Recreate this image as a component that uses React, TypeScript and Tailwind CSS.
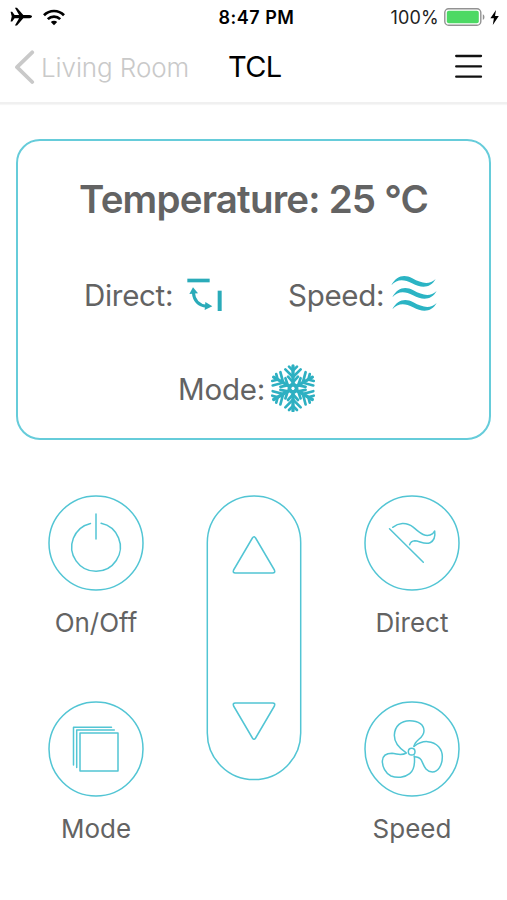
import React from 'react';

const STROKE = '#52c5d4';

const StatusBar: React.FC = () => (
    <div className="flex h-[34px] items-center justify-between pl-[10px] pr-[8px]">
        <div className="flex w-[180px] items-center gap-[11px]">
            <svg width="22" height="20" viewBox="0 0 22 20" fill="#000">
                <path d="M0.6 4.8H2.2L4.6 8H9.1L4.9 0.8H7L13.3 8H19.4C21.2 8 22 9 22 9.6C22 10.3 21.2 11.2 19.4 11.2H13.3L7 18.6H4.9L9.1 11.2H4.6L2.2 14.4H0.6L1.7 9.6Z" />
            </svg>
            <svg width="22" height="17" viewBox="0 0 22 17" fill="none" stroke="#000" strokeWidth="2.7">
                <path d="M1 6.2C6.5 0.6 15.5 0.6 21 6.2" />
                <path d="M4.8 10.1C8.3 6.7 13.7 6.7 17.2 10.1" />
                <path d="M11 16.2L7.8 13C9.5 11.4 12.5 11.4 14.2 13Z" fill="#000" stroke="none" />
            </svg>
        </div>
        <span className="pl-[4px] pt-px text-[18px] font-semibold tracking-[0.5px] text-black">8:47 PM</span>
        <div className="flex w-[180px] items-center justify-end">
            <span className="mr-[5px] pt-px text-[18px] tracking-[0.2px] text-[#222]">100%</span>
            <svg width="42" height="18" viewBox="0 0 42 18">
                <rect x="0.8" y="0.8" width="36" height="16.4" rx="3.8" fill="#fff" stroke="#929292" strokeWidth="1.4" />
                <rect x="2.8" y="2.8" width="32" height="12.4" rx="2" fill="#4cd964" />
                <path d="M38.8 6.2C41 7 41 11 38.8 11.8Z" fill="#929292" />
            </svg>
            <svg className="ml-[4px]" width="9" height="15" viewBox="0 0 9 15" fill="#000">
                <path d="M6 0L0.4 8.3H3.9L2.8 15L8.8 6H5Z" />
            </svg>
        </div>
    </div>
);

const NavBar: React.FC = () => (
    <div className="flex h-[70px] items-center border-b-2 border-[#f0f0f0] pb-[2px] pl-[14px] pr-[24px] shadow-[0_1px_1px_#f6f6f6]">
        <button className="flex w-[214px] items-center text-[#c9c9c9]">
            <svg width="22" height="34" viewBox="0 0 22 34" fill="none" stroke="currentColor" strokeWidth="3.8" strokeLinecap="round" strokeLinejoin="round">
                <path d="M18.2 2.3L3 17.2L18.2 32" />
            </svg>
            <span className="ml-[5px] whitespace-nowrap pt-px text-[26px] font-light tracking-[-0.1px]">Living Room</span>
        </button>
        <h1 className="text-[29px] tracking-[-0.6px] text-black">TCL</h1>
        <button className="mb-[2px] ml-auto">
            <svg width="30" height="26" viewBox="0 0 30 26" stroke="#111" strokeWidth="2.3" strokeLinecap="round">
                <path d="M3.2 3H28M3.2 13.4H28M3.2 23.7H28" />
            </svg>
        </button>
    </div>
);

const SwingIcon: React.FC = () => (
    <svg width="38" height="36" viewBox="348 49 114 108" fill="#2aabb9">
        <rect x="352" y="57" width="67" height="11" />
        <rect x="443" y="93" width="12" height="61" />
        <path d="M370 98C372 123 386 137 410 140" fill="none" stroke="#2aabb9" strokeWidth="9" />
        <path d="M369 83L384 101L358 103Z" />
        <path d="M427 140L404 151L406 127Z" />
    </svg>
);

const WavesIcon: React.FC = () => {
    const wave = 'M4 34C19 5 43 0 67 13C94 28 117 34 137 15C122 42 96 44 66 28C42 15 22 14 4 34Z';
    return (
        <svg width="48" height="40" viewBox="0 0 144 120" fill="#2bb4c4">
            <path d={wave} />
            <path d={wave} transform="translate(3 36)" />
            <path d={wave} transform="translate(3 72)" />
        </svg>
    );
};

const SnowflakeIcon: React.FC = () => (
    <svg width="48" height="48" viewBox="-72 -73 144 144" fill="none" stroke="#2eb0c2" strokeWidth="8" strokeLinecap="round">
        {[0, 60, 120, 180, 240, 300].map((angle) => (
            <g key={angle} transform={`rotate(${angle})`}>
                <path d="M0 -10V-67" strokeWidth="10" />
                <path d="M-12 -65L0 -53L12 -65" />
                <path d="M-23 -57L0 -34L23 -57" />
                <path d="M-15 -35L0 -18L15 -35" />
            </g>
        ))}
        <circle r="11" strokeWidth="11" />
    </svg>
);

const DisplayPanel: React.FC = () => (
    <div className="mx-[16px] mt-[35px] h-[301px] rounded-[24px] border-2 border-[#66ccda] text-[#636363]">
        <h2 className="mt-[34px] whitespace-nowrap text-center text-[38.5px] font-semibold leading-[48px] tracking-[-0.8px]">Temperature: 25 °C</h2>
        <div className="mt-[51px] flex h-[40px] items-center pl-[66px]">
            <div className="flex w-[204px] items-center">
                <span className="w-[102px] whitespace-nowrap pt-[3px] text-[29.5px] tracking-[-0.3px]">Direct:</span>
                <SwingIcon />
            </div>
            <div className="flex items-center">
                <span className="w-[102px] whitespace-nowrap pt-[3px] text-[29.5px] tracking-[-0.3px]">Speed:</span>
                <WavesIcon />
            </div>
        </div>
        <div className="mt-[50px] flex h-[48px] items-center pl-[160px]">
            <span className="w-[91px] whitespace-nowrap pt-[3px] text-[29.5px] tracking-[-0.2px]">Mode:</span>
            <SnowflakeIcon />
        </div>
    </div>
);

interface RoundButtonProps {
    label: string;
    children: React.ReactNode;
}

const RoundButton: React.FC<RoundButtonProps> = ({ label, children }) => (
    <button className="flex w-[96px] flex-col items-center">
        <svg width="96" height="96" viewBox="0 0 96 96" fill="none" stroke={STROKE} strokeWidth="1.5" strokeLinecap="round" strokeLinejoin="round">
            <circle cx="48" cy="48" r="47" />
            {children}
        </svg>
        <span className="mt-[14px] whitespace-nowrap text-[26px] leading-[36px] text-[#636363]">{label}</span>
    </button>
);

const Controls: React.FC = () => (
    <div className="mt-[55px] flex justify-between pl-[48px] pr-[47px]">
        <div className="flex flex-col gap-[60px]">
            <RoundButton label="On/Off">
                <path d="M42.5 28.4A24.3 24.3 0 1 0 53.1 28.3" />
                <path d="M48 19V44" />
            </RoundButton>
            <RoundButton label="Mode">
                <path d="M32 32H70V70H32Z" />
                <path d="M28.7 66.5V29H66.3" />
                <path d="M25.5 64V26.2H63.5" />
            </RoundButton>
        </div>
        <svg width="96" height="286" viewBox="0 0 96 286" fill="none" stroke={STROKE} strokeWidth="1.5" strokeLinejoin="round">
            <rect x="1.3" y="1" width="93.4" height="283.6" rx="46.7" />
            <path d="M46.4 43Q48 40.6 49.6 43L68.4 75Q69.6 78 66.6 78H29.4Q26.4 78 27.6 75Z" />
            <path d="M46.4 243Q48 245.4 49.6 243L68.4 211Q69.6 208 66.6 208H29.4Q26.4 208 27.6 211Z" />
        </svg>
        <div className="flex flex-col gap-[60px]">
            <RoundButton label="Direct">
                <path d="M25.5 33.7L59.3 67.3" />
                <path d="M28.7 32.3C34 28.2 42 26.4 49.5 32.4C55.5 37.6 62 43.6 68.7 38.6L70.7 36C71.4 41 69.8 45.8 66 47.8C60.5 50 55.5 46 50.8 45.8C48 46 46.4 47.2 45.6 49.8" />
            </RoundButton>
            <RoundButton label="Speed">
                <g transform="translate(-9 -6) scale(0.33333)" strokeWidth="4.5">
                    <circle cx="170" cy="170" r="10" />
                    <path d="M152 172C130 158 118 141 118 121C119 92 139 77 164 77C192 77 207 90 207 107C207 131 180 133 177 154" />
                    <path d="M177 154C192 143 205 139 218 140C247 142 262 163 262 185C262 211 249 231 232 231C208 230 206 206 198 194C193 187 187 185 178 185" />
                    <path d="M178 183C180 205 177 226 164 236C149 248 126 250 108 243C90 234 82 214 82 198C83 181 96 175 111 175C127 176 137 184 154 174" />
                </g>
            </RoundButton>
        </div>
    </div>
);

const App: React.FC = () => {
    return (
        <div className="h-[900px] w-[507px] overflow-hidden bg-white font-['Inter','Liberation_Sans',sans-serif]">
            <StatusBar />
            <NavBar />
            <DisplayPanel />
            <Controls />
        </div>
    );
};

export default App;
